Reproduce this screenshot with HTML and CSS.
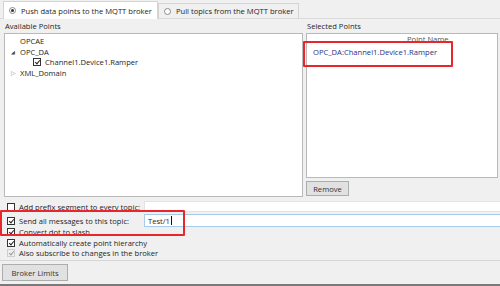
FILE: index.html
```html
<!DOCTYPE html>
<html>
<head>
<meta charset="utf-8">
<link rel="stylesheet" href="styles.css">
</head>
<body>
<div class="app">
  <div class="tabs">
    <div class="tab active"><span class="radio on"></span>Push data points to the MQTT broker</div>
    <div class="tab"><span class="radio"></span>Pull topics from the MQTT broker</div>
  </div>
  <div class="panes">
    <div class="pane left">
      <div class="label">Available Points</div>
      <div class="tree">
        <div class="node"><span class="exp"></span>OPCAE</div>
        <div class="node"><span class="exp open">&#9698;</span>OPC_DA</div>
        <div class="node child"><span class="cb checked"></span>Channel1.Device1.Ramper</div>
        <div class="node"><span class="exp closed">&#9655;</span>XML_Domain</div>
      </div>
    </div>
    <div class="pane right">
      <div class="label">Selected Points</div>
      <div class="list">
        <div class="list-head">Point Name</div>
        <div class="list-item">OPC_DA:Channel1.Device1.Ramper</div>
      </div>
      <div class="btn remove">Remove</div>
    </div>
  </div>
  <div class="options">
    <div class="opt row-input first"><span class="cb"></span><span class="opt-text">Add prefix segment to every topic:</span><span class="input"></span></div>
    <div class="opt row-input"><span class="cb checked"></span><span class="opt-text">Send all messages to this topic:</span><span class="input focus">Test/1<span class="caret"></span></span></div>
    <div class="opt"><span class="cb checked"></span>Convert dot to slash</div>
    <div class="opt"><span class="cb checked"></span>Automatically create point hierarchy</div>
    <div class="opt"><span class="cb checked disabled"></span>Also subscribe to changes in the broker</div>
  </div>
  <div class="footer">
    <div class="btn limits">Broker Limits</div>
  </div>
  <div class="mark mark-list"></div>
  <div class="mark mark-topic"></div>
</div>
</body>
</html>
```

FILE: styles.css
```css
html, body {
  margin: 0;
  padding: 0;
  background: #f0f0f0;
}
.app {
  position: relative;
  width: 500px;
  height: 286px;
  overflow: hidden;
  font-family: "Open Sans", "Noto Sans", sans-serif;
  font-size: 7.6px;
  color: #1e1e1e;
  box-sizing: border-box;
  border-bottom: 2px solid #7a7a7a;
}
.tabs {
  display: flex;
  height: 19px;
  padding-left: 3px;
  border-bottom: 1px solid #dadada;
  box-sizing: border-box;
  align-items: flex-end;
}
.tab {
  display: flex;
  align-items: center;
  height: 15px;
  padding: 0 4px 0 5px;
  border: 1px solid #d4d4d4;
  border-bottom: none;
  background: #f0f0f0;
  box-sizing: border-box;
  white-space: nowrap;
  flex: none;
}
.tab.active {
  background: #ffffff;
  height: 18px;
  margin-bottom: -1px;
  padding-right: 5px;
}
.radio {
  width: 7px;
  height: 7px;
  border: 1px solid #8a8a8a;
  border-radius: 50%;
  background: #fff;
  margin-right: 5px;
  box-sizing: border-box;
  position: relative;
  flex: none;
}
.radio.on::after {
  content: "";
  position: absolute;
  left: 1px;
  top: 1px;
  width: 3px;
  height: 3px;
  border-radius: 50%;
  background: #333;
}
.panes {
  display: flex;
  padding-left: 4px;
  gap: 3px;
  height: 180px;
}
.pane.left { width: 299px; flex: none; }
.pane.right { flex: 1; min-width: 0; display: flex; flex-direction: column; padding-right: 2px; }
.label {
  height: 14px;
  line-height: 15px;
  padding-left: 1px;
  white-space: nowrap;
}
.tree {
  height: 164px;
  background: #fff;
  border: 1px solid #b9b9b9;
  box-sizing: border-box;
  padding-top: 2px;
}
.node {
  height: 10.5px;
  line-height: 10.5px;
  display: flex;
  align-items: center;
  padding-left: 6px;
  white-space: nowrap;
}
.exp {
  width: 9px;
  flex: none;
  font-size: 5px;
  color: #444;
  text-align: left;
}
.exp.closed { color: #8a8a8a; font-size: 6px; }
.node.child { padding-left: 28px; }
.node.child .cb { margin-right: 4px; }
.list {
  height: 145px;
  background: #fff;
  border: 1px solid #b9b9b9;
  box-sizing: border-box;
}
.list-head {
  height: 10px;
  line-height: 11px;
  padding-left: 100px;
  color: #555;
  white-space: nowrap;
}
.list-item {
  height: 13px;
  line-height: 13px;
  padding-left: 6px;
  color: #1f3184;
  margin-top: 2px;
  white-space: nowrap;
}
.btn {
  display: flex;
  align-items: center;
  justify-content: center;
  background: #e1e1e1;
  border: 1px solid #adadad;
  box-sizing: border-box;
  color: #333;
  white-space: nowrap;
}
.remove {
  width: 43px;
  height: 15px;
  margin-top: 3px;
}
.options {
  padding-top: 1px;
  height: 62px;
  box-sizing: border-box;
  border-bottom: 1px solid #d6d6d6;
}
.opt {
  display: flex;
  align-items: center;
  height: 10.5px;
  padding-left: 7px;
  white-space: nowrap;
}
.opt.row-input { height: 13px; }
.opt.row-input.first { margin-bottom: 1px; }
.opt .cb { margin-right: 4px; }
.opt-text { width: 125px; flex: none; }
.cb {
  width: 8px;
  height: 8px;
  border: 1px solid #333;
  background: #fff;
  box-sizing: border-box;
  position: relative;
  flex: none;
}
.cb.checked::after {
  content: "";
  position: absolute;
  left: 1.5px;
  top: 0px;
  width: 2px;
  height: 4px;
  border-right: 1.2px solid #222;
  border-bottom: 1.2px solid #222;
  transform: rotate(40deg);
}
.cb.disabled { border-color: #cfcfcf; background: #f0f0f0; }
.cb.disabled::after { border-color: #9a9a9a; }
.input {
  flex: 1;
  height: 11px;
  background: #fff;
  border: 1px solid #e3e3e3;
  border-right: none;
  box-sizing: border-box;
  display: flex;
  align-items: center;
  padding-left: 3px;
}
.input.focus {
  height: 13px;
  border-color: #a9cbea;
}
.caret {
  width: 1px;
  height: 9px;
  background: #111;
  margin-left: 1px;
}
.footer {
  height: 22px;
  padding: 3px 0 0 2px;
  box-sizing: border-box;
}
.limits {
  width: 66px;
  height: 17px;
}
.mark {
  position: absolute;
  border: 2px solid #e8262c;
  box-sizing: border-box;
  border-radius: 1px;
}
.mark-list {
  left: 303px;
  top: 41px;
  width: 150px;
  height: 26px;
}
.mark-topic {
  left: 0px;
  top: 210px;
  width: 185px;
  height: 26px;
}
```
